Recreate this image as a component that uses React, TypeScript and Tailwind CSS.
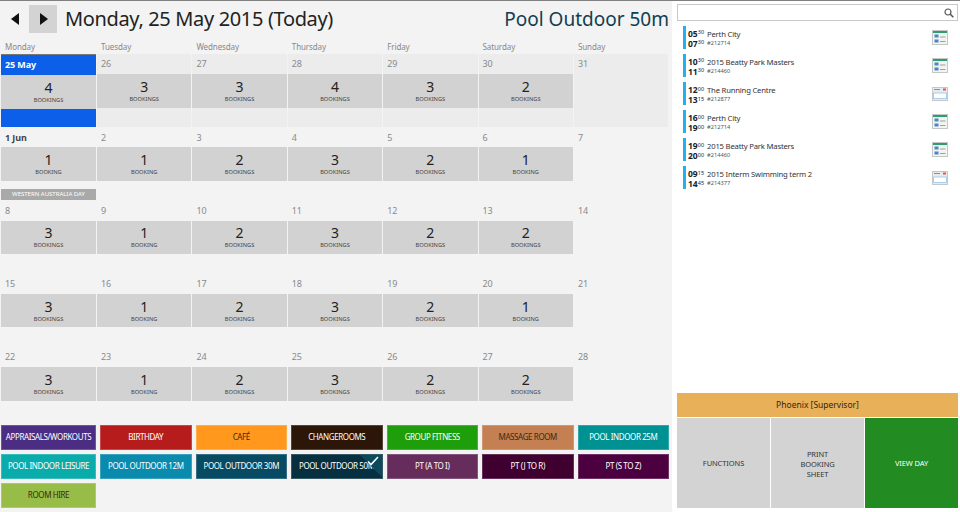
import React from "react";

const font = { fontFamily: '"Noto Sans", "Open Sans", sans-serif' };

type Cell = { label: string; n?: number; bold?: boolean };

const rows: { cells: Cell[]; holiday?: string }[] = [
  { cells: [{ label: "25 May", n: 4, bold: true }, { label: "26", n: 3 }, { label: "27", n: 3 }, { label: "28", n: 4 }, { label: "29", n: 3 }, { label: "30", n: 2 }, { label: "31" }] },
  { cells: [{ label: "1 Jun", n: 1, bold: true }, { label: "2", n: 1 }, { label: "3", n: 2 }, { label: "4", n: 3 }, { label: "5", n: 2 }, { label: "6", n: 1 }, { label: "7" }], holiday: "WESTERN AUSTRALIA DAY" },
  { cells: [{ label: "8", n: 3 }, { label: "9", n: 1 }, { label: "10", n: 2 }, { label: "11", n: 3 }, { label: "12", n: 2 }, { label: "13", n: 2 }, { label: "14" }] },
  { cells: [{ label: "15", n: 3 }, { label: "16", n: 1 }, { label: "17", n: 2 }, { label: "18", n: 3 }, { label: "19", n: 2 }, { label: "20", n: 1 }, { label: "21" }] },
  { cells: [{ label: "22", n: 3 }, { label: "23", n: 1 }, { label: "24", n: 2 }, { label: "25", n: 3 }, { label: "26", n: 2 }, { label: "27", n: 2 }, { label: "28" }] },
];

const days = ["Monday", "Tuesday", "Wednesday", "Thursday", "Friday", "Saturday", "Sunday"];

const cats: { t: string; c: string; dark?: boolean; sel?: boolean }[] = [
  { t: "APPRAISALS/WORKOUTS", c: "bg-[#4b2e83]" },
  { t: "BIRTHDAY", c: "bg-[#b71c1c]" },
  { t: "CAFÉ", c: "bg-[#ff981c]", dark: true },
  { t: "CHANGEROOMS", c: "bg-[#2b1607]" },
  { t: "GROUP FITNESS", c: "bg-[#1f9e0b]" },
  { t: "MASSAGE ROOM", c: "bg-[#c47f52]", dark: true },
  { t: "POOL INDOOR 25M", c: "bg-[#009193]" },
  { t: "POOL INDOOR LEISURE", c: "bg-[#0aabab]" },
  { t: "POOL OUTDOOR 12M", c: "bg-[#0a8aad]" },
  { t: "POOL OUTDOOR 30M", c: "bg-[#064a63]" },
  { t: "POOL OUTDOOR 50M", c: "bg-[#06303f]", sel: true },
  { t: "PT (A TO I)", c: "bg-[#652c5c]" },
  { t: "PT (J TO R)", c: "bg-[#3f0030]" },
  { t: "PT (S TO Z)", c: "bg-[#4d0040]" },
  { t: "ROOM HIRE", c: "bg-[#97bd48]", dark: true },
];

const bookings = [
  { a: "05", as: "30", b: "07", bs: "30", name: "Perth City", id: "#212714", green: true },
  { a: "10", as: "30", b: "11", bs: "30", name: "2015 Beatty Park Masters", id: "#214460", green: true },
  { a: "12", as: "00", b: "13", bs: "15", name: "The Running Centre", id: "#212877", green: false },
  { a: "16", as: "00", b: "19", bs: "00", name: "Perth City", id: "#212714", green: true },
  { a: "19", as: "00", b: "20", bs: "00", name: "2015 Beatty Park Masters", id: "#214460", green: true },
  { a: "09", as: "15", b: "14", bs: "45", name: "2015 Interm Swimming term 2", id: "#214377", green: false },
];

function GreenIcon() {
  return (
    <svg width="16" height="15" viewBox="0 0 16 15" className="block">
      <rect x="0.5" y="0.5" width="15" height="14" fill="#f2f4f2" stroke="#c4c8c4" />
      <rect x="1" y="1" width="14" height="2" fill="#2f9e6c" />
      <rect x="2.5" y="4.5" width="4" height="3" fill="#4a86c8" />
      <rect x="8" y="6.5" width="5.5" height="1" fill="#9aa0a6" />
      <rect x="2.5" y="9.5" width="4" height="3" fill="#4a86c8" />
      <rect x="8" y="11" width="5.5" height="1" fill="#9aa0a6" />
    </svg>
  );
}

function FormIcon() {
  return (
    <svg width="16" height="14" viewBox="0 0 16 14" className="block">
      <rect x="0.5" y="0.5" width="15" height="13" fill="#e8eaec" stroke="#c4c8cc" />
      <rect x="2" y="2" width="6" height="1" fill="#8c9096" />
      <rect x="11" y="1.5" width="3" height="2" fill="#e0574f" />
      <rect x="1.5" y="6" width="13" height="5.5" fill="#ffffff" stroke="#a9cdea" />
    </svg>
  );
}

function Calendar() {
  return (
    <div className="flex flex-col">
      {rows.map((r, i) => {
        const first = i === 0;
        return (
          <div key={i} className="grid grid-cols-[95px_repeat(6,94.4px)] gap-x-px h-[73.3px]">
            {r.cells.map((c, j) => {
              const today = first && j === 0;
              return (
                <div key={j} className={`flex flex-col h-full ${first ? (today ? "bg-[#0b5fe8] border-t border-[#777]" : "bg-[#ececec]") : ""}`}>
                  <div
                    className={`h-[20px] shrink-0 pl-[4px] flex items-center text-[9px] tracking-[-0.1px] ${
                      today ? "text-white font-bold" : c.bold ? "text-[#444] font-bold" : "text-[#8a8a8a]"
                    }`}
                  >
                    {c.label}
                  </div>
                  {c.n !== undefined && (
                    <div className="h-[33.5px] shrink-0 bg-[#d2d2d2] flex flex-col items-center justify-center text-[#222]">
                      <div className="text-[14px] leading-[15px]">{c.n}</div>
                      <div className="text-[5.7px] leading-[8px] mt-[1px] text-[#444]">{c.n === 1 ? "BOOKING" : "BOOKINGS"}</div>
                    </div>
                  )}
                  {j === 0 && r.holiday && (
                    <div className="mt-[8px] h-[11px] bg-[#a9a9a9] text-white text-[6px] leading-[11px] text-center">{r.holiday}</div>
                  )}
                </div>
              );
            })}
          </div>
        );
      })}
    </div>
  );
}

export default function App() {
  return (
    <div style={font} className="w-[960px] h-[512px] overflow-hidden flex bg-white border-t border-[#808080]">
      <div className="w-[672px] h-full bg-[#f3f3f3] flex flex-col shrink-0 pl-[1px]">
        <div className="h-[40px] flex items-start pt-[4px] shrink-0 relative">
          <div className="w-[28px] h-[28px] flex items-center justify-center">
            <svg width="9" height="12" viewBox="0 0 9 12"><path d="M8 0V12L0 6Z" fill="#111" /></svg>
          </div>
          <div className="w-[28px] h-[28px] bg-[#d3d3d3] flex items-center justify-center">
            <svg width="9" height="12" viewBox="0 0 9 12"><path d="M1 0V12L9 6Z" fill="#111" /></svg>
          </div>
          <div className="ml-[8px] text-[20px] tracking-[-0.35px] leading-[28px] text-[#222] whitespace-nowrap">Monday, 25 May 2015 (Today)</div>
          <div className="ml-auto mr-[3px] text-[19px] leading-[28px] text-[#11404f] whitespace-nowrap">Pool Outdoor 50m</div>
        </div>
        <div className="grid grid-cols-[95px_repeat(6,94.4px)] gap-x-px h-[13px] shrink-0">
          {days.map((d) => (
            <div key={d} className="pl-[4px] text-[8px] tracking-[-0.1px] leading-[12px] text-[#888]">{d}</div>
          ))}
        </div>
        <Calendar />
        <div className="grid grid-cols-[95px_repeat(6,91.5px)] gap-x-[4px] gap-y-[4px] mt-[4.5px] w-[668px]">
          {cats.map((c) => (
            <div
              key={c.t}
              className={`relative h-[25px] flex items-center justify-center overflow-hidden whitespace-nowrap text-[8px] tracking-[-0.4px] border border-white/20 ${c.c} ${c.dark ? "text-[#3a2a10]" : "text-white"}`}
            >
              {c.t}
              {c.sel && (
                <>
                  <div className="absolute top-0 right-0 w-0 h-0 border-t-[22px] border-l-[22px] border-t-[#0a4a5c] border-l-transparent" />
                  <svg width="12" height="10" viewBox="0 0 12 10" className="absolute top-[1px] right-[3px]">
                    <path d="M1 5.5L4 8.5L11 1" fill="none" stroke="#fff" strokeWidth="1.6" />
                  </svg>
                </>
              )}
            </div>
          ))}
        </div>
      </div>

      <div className="flex-1 h-full flex flex-col pl-[5px] pr-[2px] pt-[3px] pb-[4px]">
        <div className="h-[17px] border border-[#c8c8c8] shrink-0 flex items-center justify-end pr-[3px]">
          <svg width="10" height="10" viewBox="0 0 10 10">
            <circle cx="4" cy="4" r="3" fill="none" stroke="#555" strokeWidth="1.2" />
            <path d="M6.3 6.3L9.3 9.3" stroke="#555" strokeWidth="1.6" />
          </svg>
        </div>
        <div className="flex flex-col gap-[5.1px] mt-[5px] pl-[6px] pr-[10px]">
          {bookings.map((b, i) => (
            <div key={i} className="h-[23px] flex items-center">
              <div className="w-[3px] h-full bg-[#22b1f0] shrink-0" />
              <div className="w-[19px] ml-[2px] pt-[2px] shrink-0 text-[#222] font-bold text-[8.5px] leading-[10px]">
                <div>{b.a}<sup className="text-[5.5px] font-normal top-[-0.4em]">{b.as}</sup></div>
                <div>{b.b}<sup className="text-[5.5px] font-normal top-[-0.4em]">{b.bs}</sup></div>
              </div>
              <div className="flex-1 min-w-0 pt-[2px]">
                <div className="text-[7.7px] tracking-[-0.2px] leading-[10px] text-[#333]">{b.name}</div>
                <div className="text-[5.7px] leading-[9px] text-[#555]">{b.id}</div>
              </div>
              <div className="shrink-0">{b.green ? <GreenIcon /> : <FormIcon />}</div>
            </div>
          ))}
        </div>
        <div className="mt-auto flex flex-col shrink-0">
          <div className="h-[24px] bg-[#e9b05a] flex items-center justify-center text-[8.5px] text-[#33260f]">Phoenix [Supervisor]</div>
          <div className="grid grid-cols-3 gap-x-px mt-px h-[90px] text-[7.5px] tracking-[-0.1px]">
            <div className="bg-[#d3d3d3] flex items-center justify-center text-[#333] pt-[2px]">FUNCTIONS</div>
            <div className="bg-[#d3d3d3] flex items-center justify-center text-center leading-[10px] text-[#333] pt-[2px]">PRINT<br />BOOKING<br />SHEET</div>
            <div className="bg-[#228b22] flex items-center justify-center text-white pt-[2px]">VIEW DAY</div>
          </div>
        </div>
      </div>
    </div>
  );
}
